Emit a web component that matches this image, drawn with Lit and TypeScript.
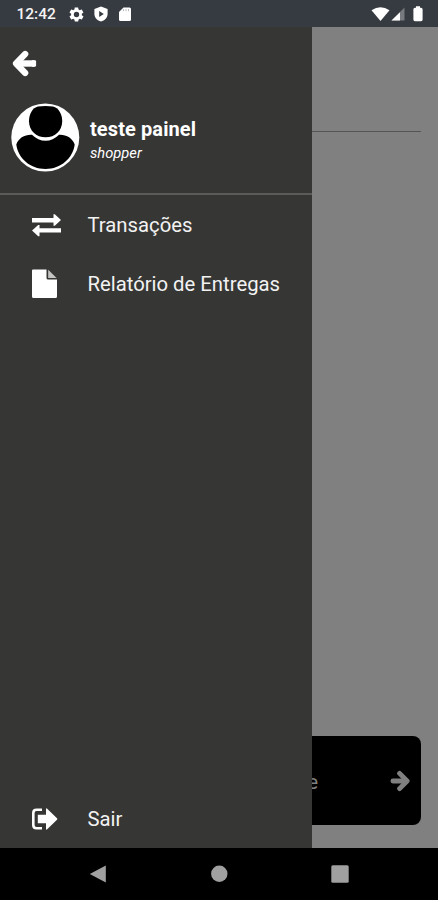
import { LitElement, html, css, svg } from "lit";
import { customElement } from "lit/decorators.js";

const gear = svg`<path fill="#fff" fill-rule="evenodd" d="M19.4 13c0-.3.1-.6.1-1s0-.7-.1-1l2.1-1.6c.2-.2.3-.4.1-.7l-2-3.400c-.1-.2-.4-.3-.6-.2l-2.500 1c-.5-.4-1.100-.7-1.700-1l-.4-2.600c0-.3-.2-.5-.5-.5h-4c-.2 0-.5.2-.5.5L9.100 5.100c-.6.3-1.200.6-1.700 1l-2.500-1c-.2-.1-.5 0-.6.2l-2 3.400c-.1.3-.1.5.1.7L4.500 11c0 .3-.1.6-.1 1s0 .7.100 1l-2.100 1.600c-.2.2-.2.4-.1.7l2 3.400c.1.2.4.3.6.2l2.500-1c.5.4 1.100.7 1.700 1l.4 2.600c0 .3.3.5.5.5h4c.3 0 .5-.2.5-.5l.4-2.600c.6-.3 1.200-.6 1.700-1l2.500 1c.2.1.5 0 .6-.2l2-3.400c.1-.3.1-.5-.1-.7zM12 15.800a3.800 3.800 0 1 1 0-7.600 3.800 3.800 0 0 1 0 7.600z"/>`;

@customElement("status-bar")
export class StatusBar extends LitElement {
  static styles = css`
    :host { display: flex; align-items: center; height: 27px; box-sizing: border-box;
      padding: 1px 15px 0 16.500px; background: #363a41; color: #f4f4f4; }
    .time { font: 500 15.500px/27px Roboto, sans-serif; width: 51px; padding-top: 1px; }
    .left, .right { display: flex; align-items: center; }
    .left { gap: 8px; flex: 1; }
    .right { gap: 1px; }
    svg { display: block; }
    .battery { margin-left: 7px; }
  `;
  render() {
    return html`
      <span class="time">12:42</span>
      <div class="left">
        <svg width="17" height="17" viewBox="0 0 24 24">${gear}</svg>
        <svg width="16" height="16" viewBox="0 0 16 16"><path fill="#fff" fill-rule="evenodd" d="M8 .5 14.600 3v5c0 3.600-2.900 6.500-6.600 7.500C4.300 14.500 1.400 11.600 1.400 8V3zM6.200 4.900v6.200L10.800 8z"/></svg>
        <svg width="16" height="16" viewBox="0 0 16 16"><path fill="#fff" d="M6.500 1.500h6q1.500 0 1.500 1.500v10.500q0 1.500-1.500 1.500h-9Q2 15 2 13.500V6z"/><path stroke="#b4b6b9" stroke-width="1" d="M6.500 3.200v2M9 3.200v2M11.500 3.200v2"/></svg>
      </div>
      <div class="right">
        <svg width="19" height="16" viewBox="0 0 19 16"><path fill="#fff" d="M.5 4.300Q9.500-2 18.500 4.300L9.500 15z"/></svg>
        <svg width="14" height="16" viewBox="0 0 14 16"><path fill="#777a7f" d="M13.500 1.500v13H.5z"/><path fill="#fff" d="M9 6.200v8.300H.5z"/></svg>
        <svg class="battery" width="10" height="16" viewBox="0 0 10 16"><path fill="#fff" d="M3 .3h4v1.400h1q1.600 0 1.600 1.500v10.600q0 1.400-1.500 1.400H1.900Q.4 15.200.4 13.800V3.200Q.4 1.700 2 1.700h1z"/></svg>
      </div>`;
  }
}

@customElement("side-drawer")
export class SideDrawer extends LitElement {
  static styles = css`
    :host { display: flex; flex-direction: column; box-sizing: border-box; background: #363634;
      color: #fff; font-family: Roboto, sans-serif; }
    svg { display: block; flex: none; }
    .back { padding: 23px 0 0 12px; }
    .profile { display: flex; align-items: center; gap: 10px; padding: 26px 0 22px 11px; height: 68px;
      border-bottom: 2px solid #5b5b5a; }
    .name { font-size: 20px; line-height: 24px; font-weight: 700; white-space: nowrap; letter-spacing: .1px; }
    .role { font-size: 14.700px; line-height: 20px; font-style: italic; margin-top: 2px; }
    .who { padding-top: 6px; }
    .row { display: flex; align-items: center; height: 59px; padding-left: 31px; }
    .row span { font-size: 20.300px; line-height: 28px; white-space: nowrap; color: #f2f2f2; padding-left: 26.500px; padding-top: 1px; }
    .list { flex: 1; }
    .exit { height: 58px; }
  `;
  render() {
    return html`
      <div class="back">
        <svg width="26" height="27" viewBox="0 0 26 27"><path d="M5 13.500h17.500" stroke="#fff" stroke-width="6.400"/><path d="M20 10.300h3q1.100 0 1.100 1.100v4.200q0 1.100-1.100 1.100h-3z" fill="#fff"/><path d="M13.200 4 4 13.500l9.200 9.500" fill="none" stroke="#fff" stroke-width="6.200" stroke-linecap="round" stroke-linejoin="round"/></svg>
      </div>
      <div class="profile">
        <svg width="69" height="69" viewBox="0 0 69 69">
          <circle cx="34.300" cy="34.500" r="34" fill="#fff"/>
          <path d="M5.300 41.500C7.500 35 14 31.300 21 31.800Q27 37.800 34.500 37.800T48 31.800C55 31.300 61.500 35 63.700 41.500C62 55 50 66 34.500 66S7 55 5.300 41.500z"/>
          <path d="M18 18.200C18 11 21.500 5 27 3.600Q34.500 2.300 42 3.600C47.500 5 51.200 11 51.200 18.200C51.200 27.500 44 34.300 34.600 34.300S18 27.500 18 18.200z"/>
        </svg>
        <div class="who"><div class="name">teste painel</div><div class="role">shopper</div></div>
      </div>
      <div class="list">
        <div class="row">
          <svg width="30" height="24" viewBox="0 0 30 24"><path fill="#fff" d="M1 5h21.500V1.300h1.300L30 7.100l-6.200 5.700h-1.300V9.500H1zM30 15.200H8.500v-3.200H7.200L1 17.600l6.200 5.700h1.300v-3.700H30z"/></svg>
          <span>Transações</span>
        </div>
        <div class="row">
          <svg width="30" height="30" viewBox="0 0 30 30"><path fill="#fff" d="M2 .6h13.500V9q0 1.500 1.500 1.500h9v17q0 1.500-1.500 1.500H2.500Q1 29 1 27.500v-26Q1 .6 2 .6z"/><path fill="#c4c4c4" d="M17.200.8 25.600 9h-8.400z"/></svg>
          <span>Relatório de Entregas</span>
        </div>
      </div>
      <div class="row exit">
        <svg width="30" height="24" viewBox="0 0 30 24"><path d="M11 2.700H5.500Q2.300 2.700 2.300 6v12q0 3.300 3.200 3.300H11" fill="none" stroke="#fff" stroke-width="2.600"/><path fill="#fff" d="M6.800 7.700h8.200V2.200q0-1.500 1.200-.5l9.800 9.500q.8.800 0 1.600l-9.800 9.500q-1.200 1-1.200-.5V16.300H6.800z"/></svg>
        <span>Sair</span>
      </div>`;
  }
}

@customElement("nav-bar")
export class NavBar extends LitElement {
  static styles = css`
    :host { display: flex; align-items: center; height: 52.500px; padding-left: 89px; gap: 103px; background: #000; box-sizing: border-box; }
    svg { display: block; }
  `;
  render() {
    return html`
      <svg width="18" height="20" viewBox="0 0 18 20"><path fill="#a0a0a0" d="M16.800 1.400v17L.8 10z"/></svg>
      <svg width="18" height="20" viewBox="0 0 18 20"><circle cx="9.300" cy="9.800" r="8.200" fill="#a0a0a0"/></svg>
      <svg width="20" height="20" viewBox="0 0 20 20"><rect x=".3" y="1.200" width="17.400" height="17.600" rx="1.500" fill="#a0a0a0"/></svg>`;
  }
}

@customElement("app-root")
export class AppRoot extends LitElement {
  static styles = css`
    :host { display: flex; flex-direction: column; width: 438px; height: 900px; overflow: hidden; background: #000; }
    .screen { position: relative; flex: 1; display: flex; flex-direction: column; justify-content: space-between;
      box-sizing: border-box; padding: 0 17px 23px; background: #808080; }
    .head { height: 104px; border-bottom: 1px solid #555; }
    .card { display: flex; align-items: center; justify-content: flex-end; height: 88.500px; border-radius: 8px;
      background: #000; color: #808080; font: 20px/28px Roboto, sans-serif; }
    .card span { padding-top: 3px; }
    .card svg { display: block; margin: 2px 10px 0 72px; }
    side-drawer { position: absolute; top: 0; bottom: 0; left: 0; width: 312px; }
  `;
  render() {
    return html`
      <status-bar></status-bar>
      <div class="screen">
        <div class="head"></div>
        <div class="card">
          <span>e</span>
          <svg width="21" height="22" viewBox="0 0 21 22"><path d="M2.900 11h13" stroke="#808080" stroke-width="4.800" stroke-linecap="round"/><path d="m9.600 3.400 7.500 7.600-7.500 7.600" fill="none" stroke="#808080" stroke-width="4.900" stroke-linecap="round" stroke-linejoin="round"/></svg>
        </div>
        <side-drawer></side-drawer>
      </div>
      <nav-bar></nav-bar>`;
  }
}
